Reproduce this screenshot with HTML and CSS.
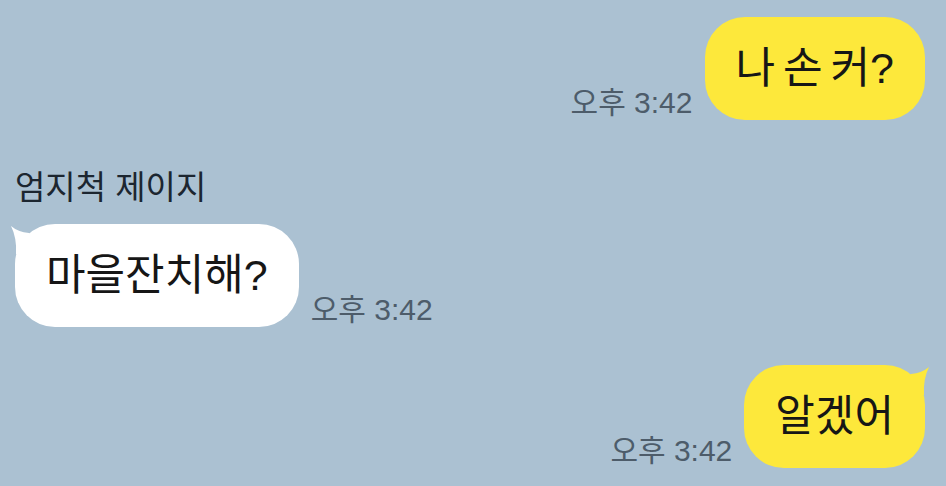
FILE: index.html
```html
<!DOCTYPE html>
<html lang="ko">
<head>
<meta charset="utf-8">
<link rel="stylesheet" href="styles.css">
</head>
<body>
<div class="chat">
  <div class="row mine first">
    <span class="time">오후 3:42</span>
    <div class="bubble yellow">나 손 커?</div>
  </div>
  <div class="sender">엄지척 제이지</div>
  <div class="row theirs">
    <div class="bubble white tailed">
      <svg class="tail tail-left" width="34" height="36" viewBox="0 0 34 36"><path d="M5 16 L13 10 Q24 9 31 3 Q25 15 26 31 L5 31 Z" fill="#ffffff"/></svg>
      마을잔치해?
    </div>
    <span class="time">오후 3:42</span>
  </div>
  <div class="row mine last">
    <span class="time">오후 3:42</span>
    <div class="bubble yellow tailed">
      <svg class="tail tail-right" width="34" height="36" viewBox="0 0 34 36"><path d="M5 16 L13 10 Q24 9 31 3 Q25 15 26 31 L5 31 Z" fill="#fde83b"/></svg>
      알겠어
    </div>
  </div>
</div>
</body>
</html>
```
FILE: styles.css
```css
html, body {
  margin: 0;
  padding: 0;
  background: #abc1d2;
  width: 946px;
  height: 486px;
  overflow: hidden;
}
.chat {
  display: flex;
  flex-direction: column;
  padding: 17px 21px 0 15px;
  font-family: "Liberation Sans", "Noto Sans CJK KR", sans-serif;
}
.row {
  display: flex;
  align-items: flex-end;
  gap: 12px;
}
.row.mine { justify-content: flex-end; }
.row.theirs { justify-content: flex-start; margin-top: 16px; }
.row.last { margin-top: 38px; }
.bubble {
  position: relative;
  font-size: 43px;
  line-height: 47px;
  padding: 28px 31px;
  border-radius: 40px;
  color: #161616;
  word-spacing: -4px;
}
.yellow { background: #fde83b; }
.white { background: #ffffff; }
.time {
  font-size: 30px;
  line-height: 32px;
  color: #4d5c6a;
  margin-bottom: 1px;
}
.sender {
  margin-top: 48px;
  font-size: 33px;
  line-height: 40px;
  color: #1c2630;
}
.tail {
  position: absolute;
  top: -1px;
}
.tail-right { right: -7px; }
.tail-left { left: -7px; transform: scaleX(-1); }
```
